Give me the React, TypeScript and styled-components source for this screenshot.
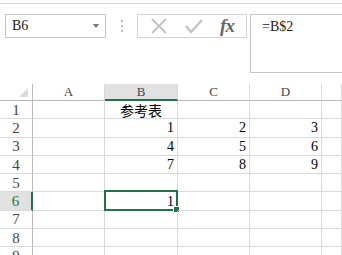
import { Fragment } from "react";
import styled, { createGlobalStyle } from "styled-components";

const Global = createGlobalStyle`
  html, body {
    margin: 0;
    padding: 0;
    background: #ffffff;
    overflow: hidden;
  }
  body {
    font-family: "Liberation Serif", "Noto Sans CJK SC", serif;
    font-size: 14px;
    color: #000;
  }
`;

const Toolbar = styled.div`
  margin-top: 3px;
  border-top: 1px solid #d6d6d6;
  height: 81px;
  display: flex;
  align-items: flex-start;
  padding: 10px 0 0 5px;
  box-sizing: border-box;
`;

const NameBox = styled.div`
  width: 101px;
  height: 24px;
  box-sizing: border-box;
  border: 1px solid #c6c6c6;
  display: flex;
  align-items: center;
  justify-content: space-between;
  padding: 0 6px 0 6px;
  font-size: 14px;
  color: #222;
`;

const Arrow = styled.div`
  width: 0;
  height: 0;
  border-left: 3.5px solid transparent;
  border-right: 3.5px solid transparent;
  border-top: 4px solid #777;
`;

const Dots = styled.div`
  width: 31px;
  height: 24px;
  display: flex;
  flex-direction: column;
  align-items: center;
  justify-content: center;
  gap: 3px;

  span {
    width: 2px;
    height: 2px;
    background: #b8b8b8;
  }
`;

const FxBox = styled.div`
  width: 110px;
  height: 24px;
  box-sizing: border-box;
  border: 1px solid #d2d2d2;
  display: flex;
  align-items: center;
  justify-content: space-around;
  padding: 0 4px;
`;

const FxText = styled.span`
  font-family: "Liberation Serif", serif;
  font-style: italic;
  font-weight: bold;
  font-size: 19px;
  color: #666;
  letter-spacing: -1px;
`;

const FormulaInput = styled.div`
  margin-left: 3px;
  flex: 1;
  height: 59px;
  box-sizing: border-box;
  border: 1px solid #c6c6c6;
  border-right: none;
  padding: 4px 0 0 11px;
  font-size: 14px;
  color: #222;
`;

const Sheet = styled.div`
  display: grid;
  grid-template-columns: 33px 72px 73px 72px 72px 1fr;
  grid-template-rows: 17px;
  grid-auto-rows: 18.3px;
`;

const HeadCell = styled.div<{ $active?: boolean; $corner?: boolean }>`
  box-sizing: border-box;
  border-right: 1px solid ${(p) => (p.$corner ? "#b9b9b9" : "#d9d9d9")};
  border-bottom: ${(p) => (p.$active ? "2px solid #217346" : "1px solid #b9b9b9")};
  background: ${(p) => (p.$active ? "#e1e1e1" : "#ffffff")};
  display: flex;
  align-items: center;
  justify-content: center;
  font-size: 13px;
  color: #444;
  position: relative;
`;

const Corner = styled.div`
  position: absolute;
  right: 4px;
  bottom: 3px;
  width: 0;
  height: 0;
  border-left: 9px solid transparent;
  border-bottom: 9px solid #dcdcdc;
`;

const RowHead = styled.div<{ $active?: boolean }>`
  box-sizing: border-box;
  border-right: ${(p) => (p.$active ? "2px solid #217346" : "1px solid #b9b9b9")};
  border-bottom: 1px solid #d9d9d9;
  background: ${(p) => (p.$active ? "#e1e1e1" : "#ffffff")};
  color: ${(p) => (p.$active ? "#217346" : "#444")};
  display: flex;
  align-items: center;
  justify-content: center;
  padding-top: 1px;
  font-size: 15px;
`;

const Cell = styled.div<{ $align?: string }>`
  box-sizing: border-box;
  border-right: 1px solid #d9d9d9;
  border-bottom: 1px solid #d9d9d9;
  display: flex;
  align-items: center;
  justify-content: ${(p) => p.$align || "flex-end"};
  padding: 1px 3px 0;
  font-size: 14px;
  white-space: nowrap;
  position: relative;
`;

const Selection = styled.div`
  position: absolute;
  left: -1px;
  top: -2px;
  right: -1px;
  bottom: -1px;
  border: 2px solid #217346;
  pointer-events: none;

  &::after {
    content: "";
    position: absolute;
    right: -4px;
    bottom: -4px;
    width: 5px;
    height: 5px;
    background: #217346;
    border: 1px solid #fff;
  }
`;

const cols = ["A", "B", "C", "D", ""];

const data: Record<number, string[]> = {
  1: ["", "参考表", "", "", ""],
  2: ["", "1", "2", "3", ""],
  3: ["", "4", "5", "6", ""],
  4: ["", "7", "8", "9", ""],
  6: ["", "1", "", "", ""],
};

const App = () => {
  const rows = [1, 2, 3, 4, 5, 6, 7, 8, 9];
  return (
    <>
      <Global />
      <Toolbar>
        <NameBox>
          B6
          <Arrow />
        </NameBox>
        <Dots>
          <span />
          <span />
          <span />
        </Dots>
        <FxBox>
          <svg width="18" height="18" viewBox="0 0 18 18">
            <path d="M2 2 L16 16 M16 2 L2 16" stroke="#c4c4c4" strokeWidth="2" fill="none" />
          </svg>
          <svg width="20" height="18" viewBox="0 0 20 18">
            <path d="M2 9 L7 15 L18 3" stroke="#c4c4c4" strokeWidth="2.4" fill="none" />
          </svg>
          <FxText>fx</FxText>
        </FxBox>
        <FormulaInput>=B$2</FormulaInput>
      </Toolbar>
      <Sheet>
        <HeadCell $corner>
          <Corner />
        </HeadCell>
        {cols.map((c, i) => (
          <HeadCell key={i} $active={c === "B"}>
            {c}
          </HeadCell>
        ))}
        {rows.map((r) => (
          <Fragment key={r}>
            <RowHead $active={r === 6}>{r}</RowHead>
            {cols.map((c, i) => (
              <Cell key={i} $align={r === 1 ? "center" : "flex-end"}>
                {data[r]?.[i] ?? ""}
                {r === 6 && c === "B" && <Selection />}
              </Cell>
            ))}
          </Fragment>
        ))}
      </Sheet>
    </>
  );
};

export default App;
